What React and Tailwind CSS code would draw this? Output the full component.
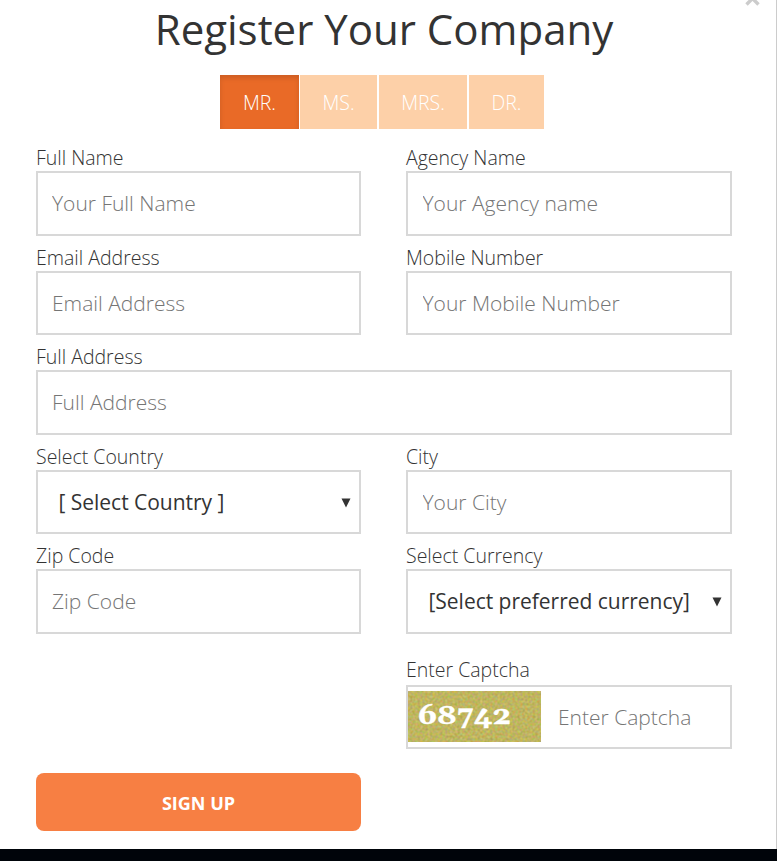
import { useState } from 'react'

const TITLES = [
  { label: 'MR.', width: 'w-[79px]' },
  { label: 'MS.', width: 'w-[77px] ml-px' },
  { label: 'MRS.', width: 'w-[88px] ml-[2px]' },
  { label: 'DR.', width: 'w-[75px] ml-[2px]' },
]

function Label({ children }) {
  return <span className="flex h-[35px] items-end pb-[1px] text-[19.5px] leading-6 font-light text-[#333]">{children}</span>
}

function Field({ title, placeholder, height = 'h-[65px] pb-[2px]', padding = 'px-[14px]', className = '' }) {
  return (
    <label className={`block ${className}`}>
      <Label>{title}</Label>
      <input
        type="text"
        placeholder={placeholder}
        className={`${height} ${padding} block w-full border-2 border-[#d8d8d8] bg-white text-[21px] font-light text-[#333] outline-none placeholder:text-[#757575]`}
      />
    </label>
  )
}

function Select({ title, text, height = 'h-[65px]' }) {
  return (
    <div>
      <Label>{title}</Label>
      <button type="button" className={`${height} flex w-full items-center justify-between border-2 border-[#d8d8d8] bg-white pl-[20.5px] pr-2 text-[21px] text-[#333]`}>
        <span className="whitespace-nowrap tracking-[-0.02px]">{text}</span>
        <svg width="10" height="10" viewBox="0 0 10 10" fill="#333">
          <path d="M0.5 0.5h9L5 9.5z" />
        </svg>
      </button>
    </div>
  )
}

function Captcha() {
  return (
    <svg width="133" height="51" viewBox="0 0 133 51" className="shrink-0">
      <filter id="grain" x="0" y="0" width="100%" height="100%" colorInterpolationFilters="sRGB">
        <feTurbulence type="fractalNoise" baseFrequency="0.4" numOctaves="1" seed="7" />
        <feColorMatrix values="0.3 0 0 0 0.6  0 0.25 0 0 0.585  0 0 0.35 0 0.2  0 0 0 0 1" />
      </filter>
      <rect width="133" height="51" filter="url(#grain)" />
      <text
        x="10"
        y="32.5"
        fontSize="26"
        textLength="93"
        lengthAdjust="spacingAndGlyphs"
        fontFamily="Georgia, Gelasio, serif"
        fontWeight="700"
        fill="#fff"
        stroke="#fff"
        strokeWidth="0.4"
      >
        68742
      </text>
    </svg>
  )
}

export default function App() {
  const [active, setActive] = useState('MR.')

  return (
    <div className="h-[861px] w-[777px] overflow-hidden bg-[#00040a] font-['Open_Sans',sans-serif]">
      <div className="relative h-[849px] border-r border-[#ccc] bg-white pl-9 pr-11">
        <svg className="absolute left-[745px] top-[-9px]" width="15" height="15" viewBox="0 0 15 15" stroke="#ccc" strokeWidth="3.4">
          <path d="M1.5 1.5l12 12M13.5 1.5l-12 12" />
        </svg>
        <h2 className="h-[75px] text-center text-[42px] leading-[58px] text-[#333]">Register Your Company</h2>

        <div className="flex h-[54px] pl-[184px]">
          {TITLES.map((t) => (
            <button
              key={t.label}
              type="button"
              onClick={() => setActive(t.label)}
              className={`${t.width} pt-[1px] text-[19.5px] font-light text-white ${
                active === t.label ? 'bg-[#e96a27] shadow-[inset_0_3px_5px_rgba(0,0,0,0.125)]' : 'bg-[#fdd0a8]'
              }`}
            >
              {t.label}
            </button>
          ))}
        </div>

        <form className="grid grid-cols-[325px_326px] gap-x-[45px] pt-[7px]">
          <Field title="Full Name" placeholder="Your Full Name" />
          <Field title="Agency Name" placeholder="Your Agency name" padding="px-[14.5px]" />
          <Field height="h-[64px]" title="Email Address" placeholder="Email Address" />
          <Field height="h-[64px]" title="Mobile Number" placeholder="Your Mobile Number" padding="px-[14.5px]" />
          <Field className="col-span-2" title="Full Address" placeholder="Full Address" />
          <Select height="h-[64px] pt-[1px]" title="Select Country" text="[ Select Country ]" />
          <Field height="h-[64px]" title="City" placeholder="Your City" padding="px-[14.5px]" />
          <Field title="Zip Code" placeholder="Zip Code" />
          <Select title="Select Currency" text="[Select preferred currency]" />

          <div className="col-start-2 pt-[14px]">
            <Label>Enter Captcha</Label>
            <div className="mt-[2px] flex h-[64px] border-2 border-[#d8d8d8] pt-[4px]">
              <Captcha />
              <input
                type="text"
                placeholder="Enter Captcha"
                className="-mt-[3px] ml-[17px] w-[160px] text-[21px] font-light outline-none placeholder:text-[#757575]"
              />
            </div>
          </div>

          <button type="button" className="col-start-1 mt-6 h-[58px] rounded-lg bg-[#f77f43] pt-[3px] text-[18px] font-bold text-white">
            SIGN UP
          </button>
        </form>
      </div>
    </div>
  )
}
